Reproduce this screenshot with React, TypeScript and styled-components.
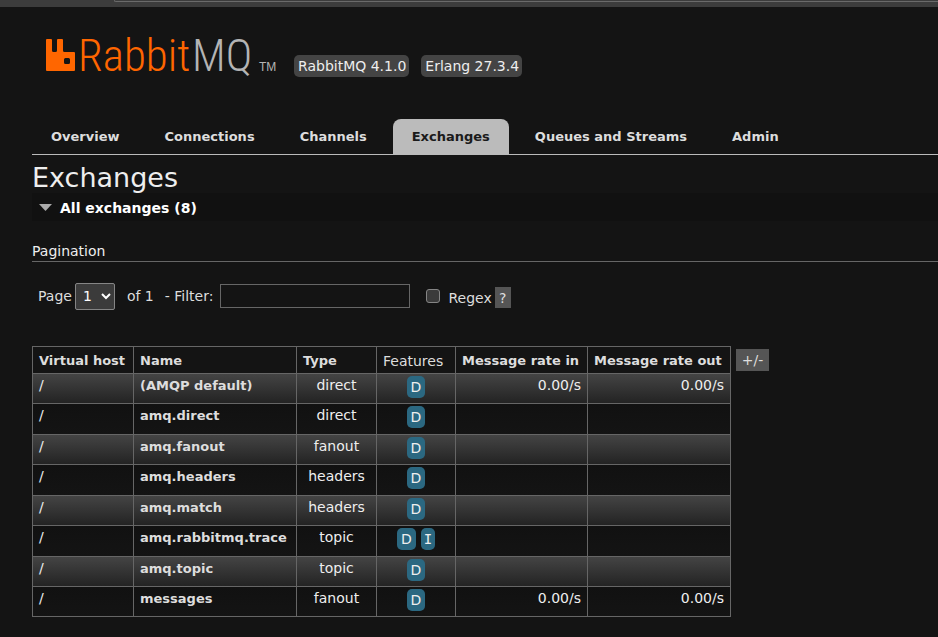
import React from "react";
import styled, { createGlobalStyle } from "styled-components";

const GlobalStyle = createGlobalStyle`
  body {
    margin: 0;
    background: #141414;
    color: #ddd;
    font: 14px/18px "DejaVu Sans", Verdana, sans-serif;
  }
  * { box-sizing: border-box; }
`;

const WindowEdge = styled.div`
  height: 7px;
  padding-left: 114px;
  background: #3c3c3c;
  overflow: hidden;
`;

const AddressBar = styled.div`
  height: 2px;
  border-bottom: 1px solid #6a6a6a;
  border-left: 1px solid #6a6a6a;
  border-bottom-left-radius: 4px;
`;

const Page = styled.div`
  padding-left: 32px;
`;

const Header = styled.header`
  display: flex;
  align-items: flex-end;
  height: 70px;
  padding-left: 14px;
`;

const Logo = styled.a`
  display: flex;
  width: 248px;
  svg { display: block; overflow: visible; }
`;

const Versions = styled.div`
  display: flex;
  gap: 12px;
`;

const Version = styled.span`
  height: 22px;
  padding: 0 3px 0 4px;
  line-height: 22px;
  font-size: 14px;
  border-radius: 5px;
  background: #444;
  color: #eee;
`;

const Tabs = styled.nav`
  display: flex;
  gap: 7px;
  margin-top: 42px;
  border-bottom: 1px solid #bbb;
`;

const Tab = styled.a<{ $active?: boolean }>`
  height: 35px;
  padding: 0 19px;
  line-height: 36px;
  font-size: 13px;
  font-weight: bold;
  white-space: nowrap;
  text-decoration: none;
  border-radius: 8px 8px 0 0;
  background: ${(p) => (p.$active ? "#bbb" : "transparent")};
  color: ${(p) => (p.$active ? "#1a1a1a" : "#ddd")};
`;

const Title = styled.h1`
  margin: 0;
  padding-top: 4px;
  height: 38px;
  font-size: 27px;
  line-height: 38px;
  font-weight: normal;
  color: #eee;
`;

const SectionToggle = styled.button`
  display: flex;
  align-items: center;
  gap: 8px;
  width: 100%;
  height: 28px;
  padding: 1px 7px 0;
  border: 0;
  background: #111;
  color: #fff;
  font: bold 14px/28px "DejaVu Sans", Verdana, sans-serif;
`;

const Subhead = styled.h3`
  margin: 21px 0 0;
  font-size: 14px;
  line-height: 19px;
  font-weight: normal;
  color: #eee;
  border-bottom: 1px solid #666;
`;

const Filters = styled.form`
  display: flex;
  align-items: center;
  height: 28px;
  margin: 20px 0 0 6px;
`;

const PageSelect = styled.select`
  width: 40px;
  height: 27px;
  margin: 0 12px 0 3px;
  padding: 0 0 0 3px;
  border: 1px solid #858585;
  border-radius: 2px;
  background: #3b3b3b;
  color: #fff;
  color-scheme: dark;
  font: 14px/18px "DejaVu Sans", Verdana, sans-serif;
`;

const FilterLabel = styled.label`
  margin-left: 11px;
`;

const FilterInput = styled.input`
  width: 190px;
  height: 24px;
  margin-left: 7px;
  border: 1px solid #666;
  background: #141414;
  color: #ddd;
`;

const RegexCheck = styled.input`
  appearance: none;
  width: 14px;
  height: 14px;
  margin: 0 8px 0 16px;
  border: 1px solid #858585;
  border-radius: 3px;
  background: #3b3b3b;
`;

const RegexLabel = styled.label`
  padding-top: 4px;
`;

const GreyButton = styled.button<{ $width: number; $height: number }>`
  width: ${(p) => p.$width}px;
  height: ${(p) => p.$height}px;
  padding: 0;
  border: 0;
  background: #555;
  color: #ddd;
  font: 14px/18px "DejaVu Sans", Verdana, sans-serif;
`;

const HelpSlot = styled.span`
  display: flex;
  margin: 3px 0 0 3px;
`;

const TableArea = styled.div`
  display: flex;
  align-items: flex-start;
  gap: 5px;
  margin-top: 36px;
`;

const ColumnsSlot = styled.div`
  padding-top: 3px;
`;

const Grid = styled.table`
  table-layout: fixed;
  width: 699px;
  border-collapse: collapse;
`;

const HeadCell = styled.th<{ $light?: boolean }>`
  height: 27px;
  padding: 2px 0 0 6px;
  border: 1px solid #666;
  text-align: left;
  white-space: nowrap;
  font-size: ${(p) => (p.$light ? 14 : 13)}px;
  font-weight: ${(p) => (p.$light ? "normal" : "bold")};
`;

const Row = styled.tr`
  height: 31px;
  background: linear-gradient(#111, #141414);
  &:nth-child(odd), &:last-child {
    height: 30px;
  }
  &:nth-child(odd) {
    background: linear-gradient(#444, #222);
  }
`;

const Cell = styled.td<{ $align?: string; $bold?: boolean }>`
  padding: ${(p) => (p.$bold ? 3 : 2)}px 6px 0;
  border: 1px solid #666;
  vertical-align: top;
  text-align: ${(p) => p.$align || "left"};
  font-weight: ${(p) => (p.$bold ? "bold" : "normal")};
  font-size: ${(p) => (p.$bold ? 13 : 14)}px;
  color: #eee;
`;

const NameLink = styled.a`
  color: #ddd;
  text-decoration: none;
`;

const Flags = styled.div`
  display: flex;
  justify-content: center;
  gap: 5px;
`;

const Flag = styled.abbr<{ $narrow?: boolean }>`
  height: 22px;
  padding: 0 ${(p) => (p.$narrow ? 3 : 4)}px;
  line-height: 23px;
  font-family: ${(p) => (p.$narrow ? '"DejaVu Sans Mono", monospace' : "inherit")};
  border-radius: 5px;
  background: #2b6881;
  color: #eee;
  text-decoration: none;
`;

const tabs = ["Overview", "Connections", "Channels", "Exchanges", "Queues and Streams", "Admin"];

const widths = [101, 163, 80, 79, 132, 143];

const exchanges = [
  { name: "(AMQP default)", type: "direct", flags: ["D"], rate: "0.00/s" },
  { name: "amq.direct", type: "direct", flags: ["D"], rate: "" },
  { name: "amq.fanout", type: "fanout", flags: ["D"], rate: "" },
  { name: "amq.headers", type: "headers", flags: ["D"], rate: "" },
  { name: "amq.match", type: "headers", flags: ["D"], rate: "" },
  { name: "amq.rabbitmq.trace", type: "topic", flags: ["D", "I"], rate: "" },
  { name: "amq.topic", type: "topic", flags: ["D"], rate: "" },
  { name: "messages", type: "fanout", flags: ["D"], rate: "0.00/s" },
];

function RabbitLogo() {
  return (
    <svg width="230" height="38" viewBox="0 0 230 38" role="img" aria-label="RabbitMQ">
      <path
        fill="#f60"
        fillRule="evenodd"
        d="M1 0H5Q6 0 6 1V11.500Q6 13 7.500 13H9.500Q11 13 11 11.500V1Q11 0 12 0H16Q17 0 17 1V11.500Q17 13 18.500 13H28Q29 13 29 14V31Q29 32 28 32H1Q0 32 0 31V1Q0 0 1 0ZM19.500 19Q18 19 18 20.500V23.500Q18 25 19.500 25H22.500Q24 25 24 23.500V20.500Q24 19 22.500 19Z"
      />
      <g fontFamily="'Roboto Condensed', 'Noto Sans Condensed', 'Liberation Sans Narrow', 'Open Sans Condensed'" fontWeight="300" fontSize="45">
        <text x="32" y="32" fill="#f60">Rabbit</text>
        <text x="146" y="32" fill="#b4b4b4">MQ</text>
      </g>
      <text x="213" y="32" fill="#b4b4b4" fontSize="12" fontFamily="'Liberation Sans', sans-serif">TM</text>
    </svg>
  );
}

export default function App() {
  return (
    <>
      <GlobalStyle />
      <WindowEdge><AddressBar /></WindowEdge>
      <Page>
        <Header>
          <Logo href="#"><RabbitLogo /></Logo>
          <Versions>
            <Version>RabbitMQ 4.1.0</Version>
            <Version>Erlang 27.3.4</Version>
          </Versions>
        </Header>
        <Tabs>
          {tabs.map((t) => (
            <Tab key={t} href="#" $active={t === "Exchanges"}>{t}</Tab>
          ))}
        </Tabs>
        <Title>Exchanges</Title>
        <SectionToggle type="button">
          <svg width="13" height="7" viewBox="0 0 13 7" aria-hidden="true">
            <path d="M0 0H13L6.500 7Z" fill="#aaa" />
          </svg>
          All exchanges (8)
        </SectionToggle>
        <Subhead>Pagination</Subhead>
        <Filters>
          <label htmlFor="page">Page</label>
          <PageSelect id="page" defaultValue="1"><option>1</option></PageSelect>
          <span>of 1</span>
          <FilterLabel htmlFor="filter">- Filter:</FilterLabel>
          <FilterInput id="filter" type="text" />
          <RegexCheck id="regex" type="checkbox" />
          <RegexLabel htmlFor="regex">Regex</RegexLabel>
          <HelpSlot><GreyButton type="button" $width={16} $height={21}>?</GreyButton></HelpSlot>
        </Filters>
        <TableArea>
          <Grid>
            <colgroup>
              {widths.map((w, i) => <col key={i} width={w} />)}
            </colgroup>
            <thead>
              <tr>
                <HeadCell>Virtual host</HeadCell>
                <HeadCell>Name</HeadCell>
                <HeadCell>Type</HeadCell>
                <HeadCell $light>Features</HeadCell>
                <HeadCell>Message rate in</HeadCell>
                <HeadCell>Message rate out</HeadCell>
              </tr>
            </thead>
            <tbody>
              {exchanges.map((x) => (
                <Row key={x.name}>
                  <Cell>/</Cell>
                  <Cell $bold><NameLink href="#">{x.name}</NameLink></Cell>
                  <Cell $align="center">{x.type}</Cell>
                  <Cell><Flags>{x.flags.map((f) => <Flag key={f} $narrow={f === "I"}>{f}</Flag>)}</Flags></Cell>
                  <Cell $align="right">{x.rate}</Cell>
                  <Cell $align="right">{x.rate}</Cell>
                </Row>
              ))}
            </tbody>
          </Grid>
          <ColumnsSlot><GreyButton type="button" $width={33} $height={22}>+/-</GreyButton></ColumnsSlot>
        </TableArea>
      </Page>
    </>
  );
}
